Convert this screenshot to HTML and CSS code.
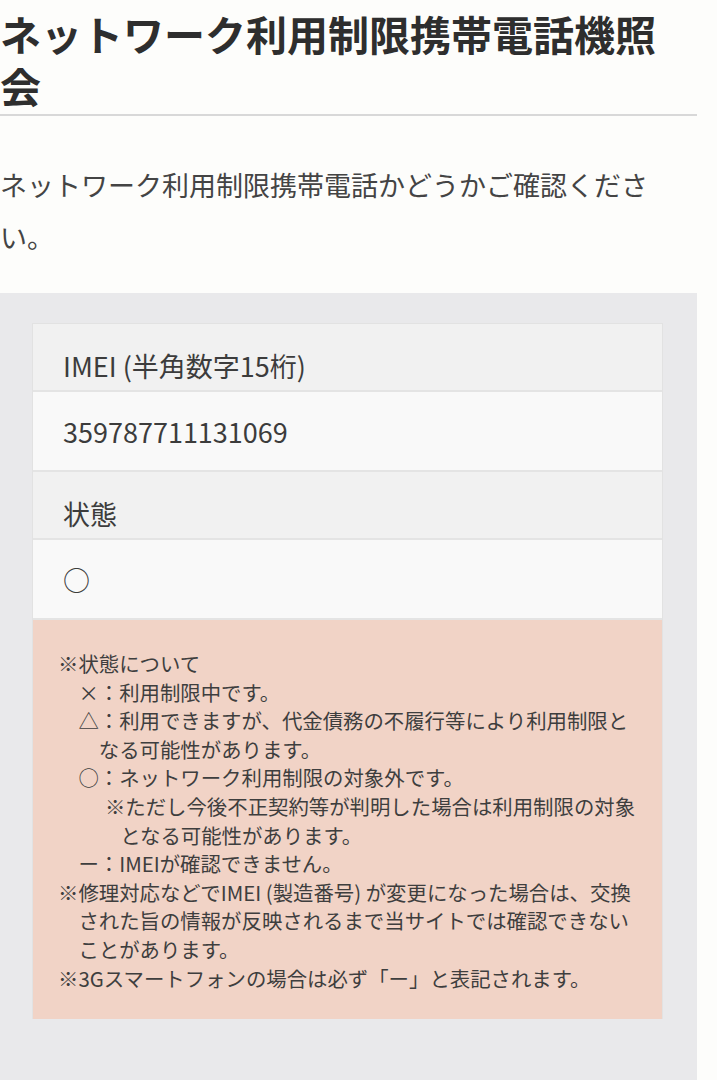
FILE: index.html
```html
<!DOCTYPE html>
<html lang="ja">
<head>
    <meta charset="UTF-8">
    <meta name="viewport" content="width=device-width, initial-scale=1.0">
    <title>ネットワーク利用制限携帯電話機照会</title>
    <link rel="stylesheet" href="styles.css">
</head>
<body>
    <div class="page">
        <h1 class="page-title">ネットワーク利用制限携帯電話機照会</h1>
        <p class="lead">ネットワーク利用制限携帯電話かどうかご確認ください。</p>

        <div class="result-panel">
            <div class="result-card">
                <div class="row row-head">IMEI (半角数字15桁)</div>
                <div class="row row-value">359787711131069</div>
                <div class="row row-head">状態</div>
                <div class="row row-value">○</div>

                <div class="notes">
                    <div class="note">※状態について</div>
                    <div class="note indent-1">×：利用制限中です。</div>
                    <div class="note indent-1">△：利用できますが、代金債務の不履行等により利用制限と</div>
                    <div class="note indent-2">なる可能性があります。</div>
                    <div class="note indent-1">○：ネットワーク利用制限の対象外です。</div>
                    <div class="note indent-3">※ただし今後不正契約等が判明した場合は利用制限の対象</div>
                    <div class="note indent-4">となる可能性があります。</div>
                    <div class="note indent-1">ー：IMEIが確認できません。</div>
                    <div class="note">※修理対応などでIMEI (製造番号) が変更になった場合は、交換</div>
                    <div class="note indent-1">された旨の情報が反映されるまで当サイトでは確認できない</div>
                    <div class="note indent-1">ことがあります。</div>
                    <div class="note">※3Gスマートフォンの場合は必ず「ー」と表記されます。</div>
                </div>
            </div>
        </div>
    </div>
</body>
</html>
```

FILE: styles.css
```css
* {
    margin: 0;
    padding: 0;
    box-sizing: border-box;
}

body {
    background-color: #fdfdfb;
    font-family: "Noto Sans CJK JP", "Noto Sans", sans-serif;
    color: #333;
}

.page {
    width: 697px;
    min-height: 1080px;
    display: flex;
    flex-direction: column;
}

.page-title {
    font-size: 41px;
    font-weight: 700;
    line-height: 52px;
    color: #2e2e2e;
    padding: 7px 30px 3px 0;
    margin-bottom: 3px;
    border-bottom: 2px solid #d8d8d8;
}

.lead {
    font-size: 27px;
    line-height: 52px;
    color: #444;
    padding-right: 30px;
    margin-top: 40px;
    margin-bottom: 30px;
}

.result-panel {
    flex: 1;
    background-color: #e9e9eb;
    padding: 30px 34px 60px 32px;
}

.result-card {
    border: 1px solid #e2e2e2;
    border-bottom: none;
}

.row {
    font-size: 27px;
    line-height: 32px;
    color: #3c3c3c;
    padding-left: 30px;
    border-bottom: 2px solid #e4e4e4;
}

.row-head {
    background-color: #f1f1f1;
    padding-top: 26px;
    padding-bottom: 8px;
}

.row-value {
    background-color: #f9f9f9;
    padding-top: 24px;
    padding-bottom: 22px;
}

.notes {
    background-color: #f1d3c6;
    padding: 29px 20px 27px 25px;
    font-size: 20.4px;
    line-height: 28.6px;
    color: #3e3e3e;
}

.note {
    white-space: nowrap;
}

.indent-1 { padding-left: 1em; }
.indent-2 { padding-left: 2em; }
.indent-3 { padding-left: 2.3em; }
.indent-4 { padding-left: 3.05em; }
```
